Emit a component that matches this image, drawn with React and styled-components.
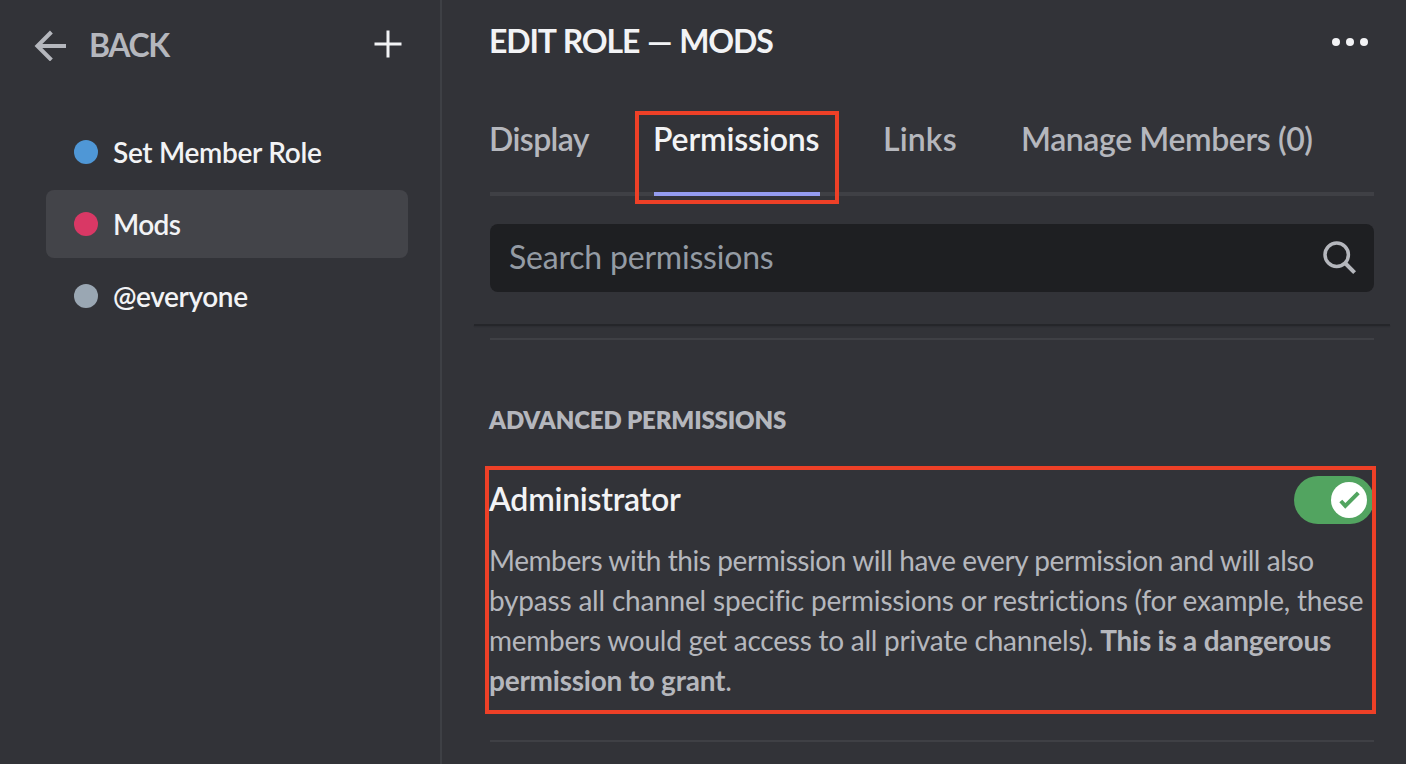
import React from 'react';
import styled, { createGlobalStyle } from 'styled-components';

const GlobalStyle = createGlobalStyle`
  * { box-sizing: border-box; }
  body {
    margin: 0;
    overflow: hidden;
    background: #323338;
    font-family: Lato, "Open Sans", sans-serif;
  }
  button { font-family: inherit; border: 0; padding: 0; background: none; }
`;

const Page = styled.div`
  display: flex;
  height: 764px;
  background: #323338;
`;

const Sidebar = styled.aside`
  width: 442px;
  flex: none;
  border-right: 2px solid #3e4045;
`;

const SidebarHeader = styled.header`
  display: flex;
  align-items: flex-start;
  justify-content: space-between;
  padding: 25px 38px 0 34px;
`;

const BackButton = styled.button`
  display: flex;
  align-items: center;
  gap: 23px;
  color: #b5b7bd;
  font-size: 32px;
  font-weight: 700;
  line-height: 40px;
  letter-spacing: -1.4px;
`;

const AddButton = styled.button`
  display: flex;
  margin-top: 5px;
  color: #f2f3f5;
`;

const RoleList = styled.nav`
  display: flex;
  flex-direction: column;
  gap: 4px;
  padding: 53px 32px 0 46px;
`;

const Role = styled.div`
  display: flex;
  align-items: center;
  gap: 15px;
  height: 68px;
  padding: 0 28px;
  border-radius: 8px;
  color: #f2f3f5;
  background: ${(p) => (p.$selected ? '#434449' : 'transparent')};
  font-size: 28px;
  font-weight: 600;
  line-height: 36px;
  letter-spacing: ${(p) => p.$tracking}px;
`;

const RoleDot = styled.span`
  width: 24px;
  height: 24px;
  border-radius: 50%;
  background: ${(p) => p.$color};
`;

const Main = styled.main`
  flex: 1;
  min-width: 0;
  padding: 21px 32px 0 48px;
`;

const TitleBar = styled.header`
  display: flex;
  align-items: flex-start;
  justify-content: space-between;
  height: 40px;
`;

const Title = styled.h1`
  margin: 0 0 0 -1px;
  color: #f2f3f5;
  font-size: 32px;
  font-weight: 700;
  line-height: 40px;
  letter-spacing: -1.15px;
  word-spacing: 1.2px;
`;

const MenuButton = styled.button`
  display: flex;
  margin: 17px 6px 0 0;
`;

const Tabs = styled.div`
  display: flex;
  gap: 64px;
  height: 77px;
  margin-top: 58px;
  border-bottom: 4px solid #3f4045;
`;

const Tab = styled.div`
  position: relative;
  height: 77px;
  width: ${(p) => p.$width}px;
  color: ${(p) => (p.$active ? '#f2f3f5' : '#b5b7bd')};
  border-bottom: 4px solid ${(p) => (p.$active ? '#949cf0' : 'transparent')};
  font-size: 32px;
  font-weight: 600;
  line-height: 40px;
  letter-spacing: ${(p) => p.$tracking}px;
  text-indent: -1px;
  white-space: nowrap;
`;

const Highlight = styled.div`
  position: absolute;
  inset: ${(p) => p.$inset};
  border: 4px solid #ee4027;
  pointer-events: none;
`;

const SearchBox = styled.div`
  display: flex;
  align-items: center;
  justify-content: space-between;
  height: 68px;
  margin-top: 28px;
  padding: 0 17px 0 19px;
  border-radius: 8px;
  color: #949ba4;
  background: #1e1f22;
  font-size: 32px;
  line-height: 40px;
  letter-spacing: -0.2px;
`;

const SearchText = styled.span`
  margin-bottom: 2px;
`;

const StickyEdge = styled.div`
  height: 2px;
  margin: 32px -16px 0;
  background: #25262a;
  box-shadow: 0 1px 1px rgba(30, 31, 34, 0.25);
`;

const Divider = styled.hr`
  height: 2px;
  margin: ${(p) => p.$top}px 0 0;
  border: 0;
  background: #3f4045;
`;

const SectionHeading = styled.h2`
  margin: 65px 0 0 -1px;
  color: #b5b7bd;
  font-size: 24px;
  font-weight: 800;
  line-height: 30px;
  letter-spacing: -0.15px;
`;

const Permission = styled.section`
  position: relative;
  margin-top: 41px;
`;

const PermissionHeader = styled.div`
  display: flex;
  justify-content: space-between;
  height: 48px;
`;

const PermissionName = styled.h3`
  margin: 3px 0 0 -1px;
  color: #f2f3f5;
  font-size: 32px;
  font-weight: 600;
  line-height: 40px;
  letter-spacing: -0.25px;
`;

const Toggle = styled.div`
  display: flex;
  justify-content: flex-end;
  align-items: center;
  width: 80px;
  height: 48px;
  padding-right: 7px;
  border-radius: 24px;
  background: #52a460;
`;

const Knob = styled.div`
  width: 36px;
  height: 36px;
  border-radius: 50%;
  background: #fff;
`;

const Description = styled.p`
  margin: 16px 0 0 -1px;
  color: #b5b7bd;
  font-size: 28px;
  line-height: 40px;
  white-space: nowrap;
`;

const Line = styled.span`
  display: block;
  letter-spacing: ${(p) => p.$tracking}px;
`;

const ROLES = [
  { name: 'Set Member Role', color: '#4f97d6', tracking: -0.3 },
  { name: 'Mods', color: '#d93865', tracking: -0.6, selected: true },
  { name: '@everyone', color: '#9aa7b3', tracking: -0.4 },
];

const TABS = [
  { label: 'Display', width: 100, tracking: -0.6 },
  { label: 'Permissions', width: 166, tracking: -0.15, active: true },
  { label: 'Links', width: 74, tracking: 0.15 },
  { label: 'Manage Members (0)', width: 292, tracking: -0.4 },
];

export default function App() {
  return (
    <>
      <GlobalStyle />
      <Page>
        <Sidebar>
          <SidebarHeader>
            <BackButton>
              <svg width="32" height="32" viewBox="0 0 32 32" fill="none" stroke="currentColor" strokeWidth="4">
                <path d="M17.4 3 3.4 17l14 14M3.4 17H32" />
              </svg>
              BACK
            </BackButton>
            <AddButton>
              <svg width="28" height="28" viewBox="0 0 28 28" stroke="currentColor" strokeWidth="3">
                <path d="M14 .5v27M.5 14h27" />
              </svg>
            </AddButton>
          </SidebarHeader>
          <RoleList>
            {ROLES.map((r) => (
              <Role key={r.name} $selected={r.selected} $tracking={r.tracking}>
                <RoleDot $color={r.color} />
                {r.name}
              </Role>
            ))}
          </RoleList>
        </Sidebar>
        <Main>
          <TitleBar>
            <Title>EDIT ROLE — MODS</Title>
            <MenuButton>
              <svg width="36" height="8" viewBox="0 0 36 8" fill="#f2f3f5">
                <circle cx="4" cy="4" r="4" />
                <circle cx="18" cy="4" r="4" />
                <circle cx="32" cy="4" r="4" />
              </svg>
            </MenuButton>
          </TitleBar>
          <Tabs>
            {TABS.map((t) => (
              <Tab key={t.label} $width={t.width} $tracking={t.tracking} $active={t.active}>
                {t.label}
                {t.active && <Highlight $inset="-8px -19px -12px -19px" />}
              </Tab>
            ))}
          </Tabs>
          <SearchBox>
            <SearchText>Search permissions</SearchText>
            <svg width="34" height="34" viewBox="0 0 34 34" fill="none" stroke="#b5b7bd">
              <circle cx="13.7" cy="13.7" r="11.7" strokeWidth="3.5" />
              <path d="M22 22l9.6 9.6" strokeWidth="4" />
            </svg>
          </SearchBox>
          <StickyEdge />
          <Divider $top={12} />
          <SectionHeading>ADVANCED PERMISSIONS</SectionHeading>
          <Permission>
            <PermissionHeader>
              <PermissionName>Administrator</PermissionName>
              <Toggle>
                <Knob>
                  <svg width="36" height="36" viewBox="0 0 36 36" fill="none" stroke="#52a460" strokeWidth="4">
                    <path d="M9.8 19l4.5 4.9L27.3 10.8" />
                  </svg>
                </Knob>
              </Toggle>
            </PermissionHeader>
            <Description>
              <Line $tracking={-0.42}>Members with this permission will have every permission and will also</Line>
              <Line $tracking={-0.2}>bypass all channel specific permissions or restrictions (for example, these</Line>
              <Line $tracking={-0.24}>
                members would get access to all private channels). <b>This is a dangerous</b>
              </Line>
              <Line $tracking={-0.24}>
                <b>permission to grant</b>.
              </Line>
            </Description>
            <Highlight $inset="-10px -2px -14px -5px" />
          </Permission>
          <Divider $top={40} />
        </Main>
      </Page>
    </>
  );
}
